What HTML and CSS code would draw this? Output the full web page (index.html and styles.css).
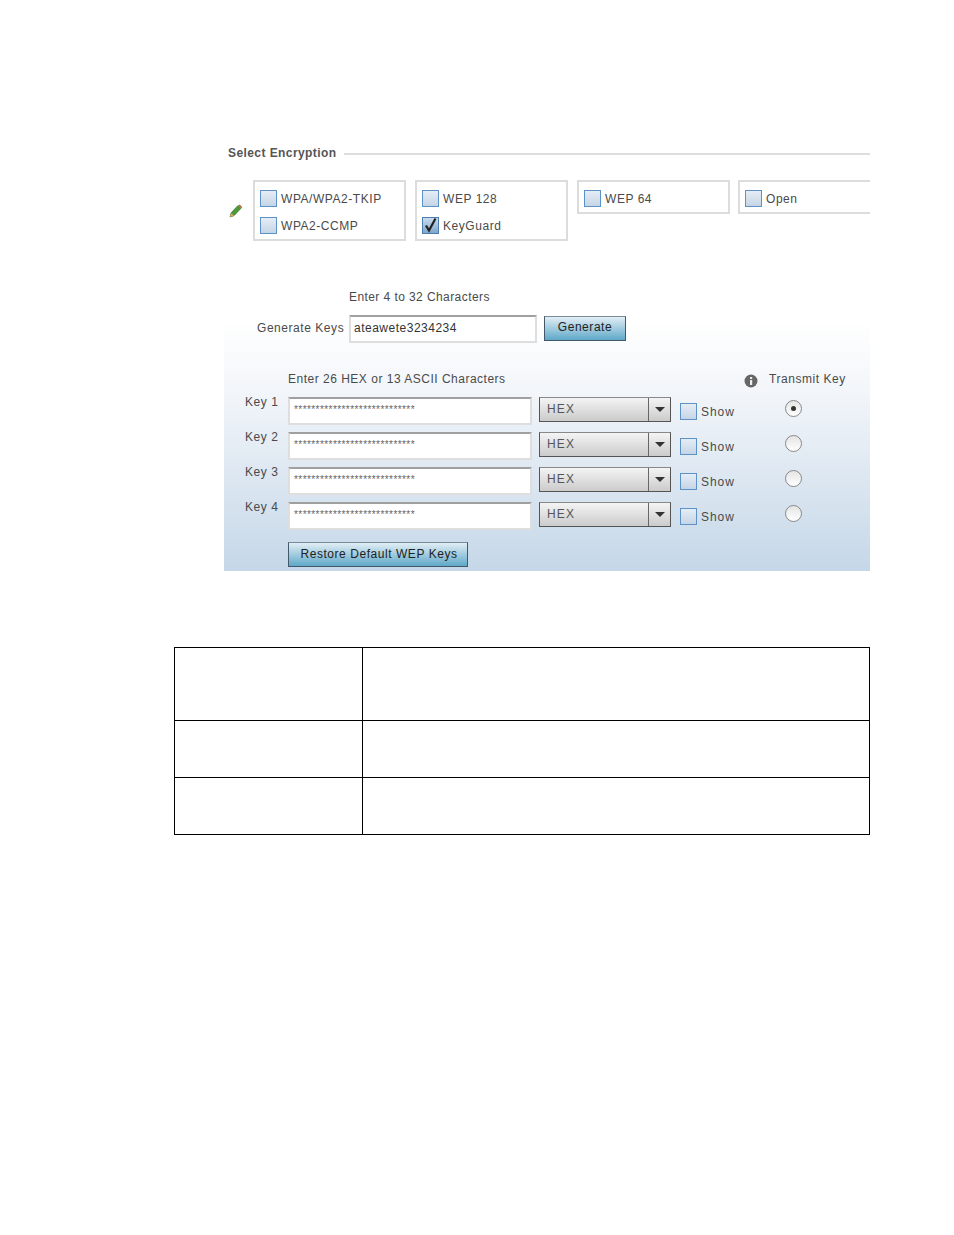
FILE: index.html
```html
<!DOCTYPE html>
<html lang="en">
<head>
<meta charset="utf-8">
<title>Select Encryption</title>
<link rel="stylesheet" href="styles.css">
</head>
<body>
<main class="page">
  <section class="figure">
    <div class="section-head"><span class="section-title">Select Encryption</span><span class="section-rule"></span></div>
    <div class="enc-row">
      <svg class="pencil" width="14" height="14" viewBox="0 0 14 14"><path d="M1 13l1-4 7-7.500 3 2.800-7 7.400z" fill="#4f9a35" stroke="#2f6f2a" stroke-width=".7"/><path d="M1 13l1-4 3 2.700z" fill="#e0a070"/><path d="M9.500 1.500l2.800 2.800 1-1.200-2.700-2.600z" fill="#b9683f"/></svg>
      <div class="enc-groups">
        <div class="enc-box">
          <label class="check"><span class="box"></span>WPA/WPA2-TKIP</label>
          <label class="check"><span class="box"></span>WPA2-CCMP</label>
        </div>
        <div class="enc-box">
          <label class="check"><span class="box"></span>WEP 128</label>
          <label class="check"><span class="box box-on"><svg width="17" height="17" viewBox="0 0 17 17"><path d="M4 8.500l3 5L13.500 1.500" fill="none" stroke="#222" stroke-width="2.200"/></svg></span>KeyGuard</label>
        </div>
        <div class="enc-box enc-short">
          <label class="check"><span class="box"></span>WEP 64</label>
        </div>
        <div class="enc-box enc-short enc-open">
          <label class="check"><span class="box"></span>Open</label>
        </div>
      </div>
    </div>
    <div class="panel">
      <div class="hint-gen">Enter 4 to 32 Characters</div>
      <div class="gen-row">
        <span class="gen-label">Generate Keys</span>
        <span class="field gen-field">ateawete3234234</span>
        <button class="btn btn-gen">Generate</button>
      </div>
      <div class="keys-head">
        <span class="hint-keys">Enter 26 HEX or 13 ASCII Characters</span>
        <svg class="info" width="14" height="14" viewBox="0 0 14 14"><circle cx="7" cy="7" r="6.500" fill="#666"/><rect x="6" y="6" width="2.200" height="5" fill="#eee"/><rect x="6" y="3" width="2.200" height="2" fill="#eee"/></svg>
        <span class="transmit">Transmit Key</span>
      </div>
      <div class="keys">
        <div class="key-row">
          <span class="key-label">Key 1</span>
          <span class="field key-field">****************************</span>
          <span class="select"><span class="select-value">HEX</span><span class="select-arrow"></span></span>
          <label class="check show"><span class="box"></span>Show</label>
          <span class="radio radio-on"></span>
        </div>
        <div class="key-row">
          <span class="key-label">Key 2</span>
          <span class="field key-field">****************************</span>
          <span class="select"><span class="select-value">HEX</span><span class="select-arrow"></span></span>
          <label class="check show"><span class="box"></span>Show</label>
          <span class="radio"></span>
        </div>
        <div class="key-row">
          <span class="key-label">Key 3</span>
          <span class="field key-field">****************************</span>
          <span class="select"><span class="select-value">HEX</span><span class="select-arrow"></span></span>
          <label class="check show"><span class="box"></span>Show</label>
          <span class="radio"></span>
        </div>
        <div class="key-row">
          <span class="key-label">Key 4</span>
          <span class="field key-field">****************************</span>
          <span class="select"><span class="select-value">HEX</span><span class="select-arrow"></span></span>
          <label class="check show"><span class="box"></span>Show</label>
          <span class="radio"></span>
        </div>
      </div>
      <button class="btn btn-restore">Restore Default WEP Keys</button>
    </div>
  </section>
  <table class="doc-table">
    <tr class="row-a"><td class="col-a"></td><td></td></tr>
    <tr class="row-b"><td class="col-a"></td><td></td></tr>
    <tr class="row-b"><td class="col-a"></td><td></td></tr>
  </table>
</main>
</body>
</html>
```
FILE: styles.css
```css
* { box-sizing: border-box; }
html, body { margin: 0; background: #fff; }
body { font-family: "Liberation Sans", Arial, sans-serif; font-size: 12px; color: #4a4a4a; letter-spacing: .55px; }
.page { padding: 145px 84px 0 174px; height: 1235px; overflow: hidden; }
.figure { margin-left: 50px; width: 646px; height: 426px; overflow: hidden; display: flex; flex-direction: column; }
.section-head { display: flex; align-items: center; gap: 7px; padding-left: 4px; height: 16px; }
.section-title { font-weight: bold; color: #555; font-size: 12px; letter-spacing: .42px; }
.section-rule { flex: 1; height: 2px; background: #ddd; margin-top: 1px; }
.enc-row { display: flex; margin-top: 19px; height: 61px; padding-left: 5px; }
.pencil { margin-top: 24px; flex: none; }
.enc-groups { display: flex; gap: 9px; margin-left: 10px; align-items: flex-start; }
.enc-box { width: 153px; height: 61px; flex: none; border: 2px solid #dcdcdc; padding: 8px 5px; display: flex; flex-direction: column; gap: 10px; }
.enc-short { height: 34px; }
.enc-open { border-right: 0; margin-left: -1px; }
.check { display: flex; align-items: center; gap: 4px; height: 17px; }
.box { width: 17px; height: 17px; flex: none; border: 1px solid #5b93c8; background: linear-gradient(#e6edf5, #c5d5e6); display: block; }
.box-on { border-color: #4a7fb0; background: linear-gradient(#c9dcee, #7ea6cc); }
.box-on svg { display: block; margin: -1px; }
.panel { flex: 1; background: linear-gradient(#fff 0, #fff 24%, #f3f6fa 45%, #c5d7e8 100%); display: flex; flex-direction: column; padding-top: 48px; }
.hint-gen { margin-left: 125px; height: 16px; line-height: 16px; letter-spacing: .42px; }
.gen-row { display: flex; align-items: center; margin-top: 10px; margin-left: 33px; height: 28px; }
.gen-label { width: 92px; padding-bottom: 2px; }
.field { background: #fff; border: 2px solid #dedede; border-top-color: #a0a0a0; display: block; }
.gen-field { width: 188px; height: 28px; line-height: 23px; padding-left: 3px; color: #333; letter-spacing: .5px; }
.btn { font: inherit; letter-spacing: inherit; color: #222; border: 1px solid #45586a; border-top-color: #7a8a99; background: linear-gradient(#e2eef5, #5fa8c9); padding: 0 0 2px; }
.btn-gen { width: 82px; height: 25px; margin-left: 7px; margin-top: -2px; }
.keys-head { display: flex; margin-top: 28px; height: 16px; align-items: center; margin-left: 64px; }
.hint-keys { width: 456px; letter-spacing: .5px; }
.info { margin-top: 3px; }
.transmit { margin-left: 11px; }
.keys { display: flex; flex-direction: column; gap: 7px; margin-top: 10px; margin-left: 21px; }
.key-row { display: flex; height: 28px; align-items: flex-start; }
.key-label { width: 43px; line-height: 14px; margin-top: -2px; }
.key-field { width: 244px; height: 28px; font-size: 10px; letter-spacing: .43px; color: #666; padding: 5px 0 0 4px; line-height: 12px; }
.select { width: 132px; height: 25px; margin-left: 7px; border: 1px solid #555; border-top-color: #888; background: linear-gradient(#f4f4f4, #cbcbcb); display: flex; }
.select-value { flex: 1; padding-left: 7px; line-height: 22px; letter-spacing: 1.2px; color: #555; }
.select-arrow { width: 22px; border-left: 1px solid #666; position: relative; }
.select-arrow::after { content: ""; position: absolute; left: 6px; top: 9px; border: 5px solid transparent; border-top: 5px solid #333; border-bottom: 0; }
.show { margin-left: 9px; margin-top: 6px; letter-spacing: .95px; }
.radio { width: 17px; height: 17px; margin-left: 50px; border-radius: 50%; border: 1px solid #888; background: linear-gradient(#e4e4e4, #fff); position: relative; margin-top: 3px; }
.radio-on::after { content: ""; position: absolute; left: 5px; top: 5px; width: 5px; height: 5px; background: #333; border-radius: 50%; }
.btn-restore { width: 180px; height: 25px; margin-top: 12px; margin-left: 64px; flex: none; padding-left: 2px; }
.doc-table { border-collapse: collapse; margin-top: 76px; width: 696px; table-layout: fixed; }
.doc-table td { border: 1px solid #000; padding: 0; }
.col-a { width: 188px; }
.row-a { height: 73px; }
.row-b { height: 57px; }
```
